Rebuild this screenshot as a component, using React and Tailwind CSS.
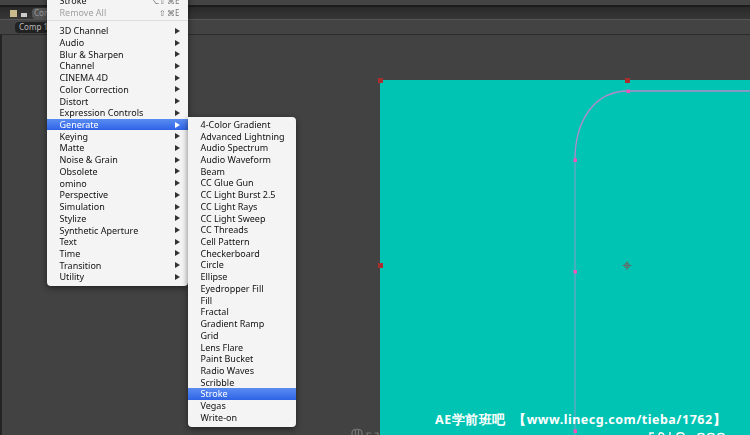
const effects = ["3D Channel","Audio","Blur & Sharpen","Channel","CINEMA 4D","Color Correction","Distort","Expression Controls","Generate","Keying","Matte","Noise & Grain","Obsolete","omino","Perspective","Simulation","Stylize","Synthetic Aperture","Text","Time","Transition","Utility"];
const generate = ["4-Color Gradient","Advanced Lightning","Audio Spectrum","Audio Waveform","Beam","CC Glue Gun","CC Light Burst 2.5","CC Light Rays","CC Light Sweep","CC Threads","Cell Pattern","Checkerboard","Circle","Ellipse","Eyedropper Fill","Fill","Fractal","Gradient Ramp","Grid","Lens Flare","Paint Bucket","Radio Waves","Scribble","Stroke","Vegas","Write-on"];

function Row({ label, active, arrow, right, muted }) {
  return (
    <div className={`flex h-[11.72px] items-center justify-between pl-[12.5px] pr-[8px] leading-none whitespace-nowrap ${active ? "bg-gradient-to-b from-[#5b8cf2] to-[#2f63e6] text-white" : muted ? "text-[#a0a0a0]" : "text-[#111]"}`}>
      <span>{label}</span>
      {arrow && <span className={`h-0 w-0 border-y-[3px] border-l-[5px] border-y-transparent ${active ? "border-l-white" : "border-l-[#333]"}`} />}
      {right && <span className="text-[8px] tracking-[0.5px] text-[#777]">{right}</span>}
    </div>
  );
}

function Handle({ className }) {
  return <div className={`absolute size-[5px] bg-[#a5302f] ${className}`} />;
}

export default function App() {
  return (
    <div className="relative h-[435px] w-[750px] overflow-hidden bg-[#424242] font-['DejaVu_Sans',sans-serif]">
      <div className="h-[7px] border-b-[2px] border-[#1c1c1c] bg-[#444]" />
      <div className="flex h-[13px] items-center gap-[3px] border-b border-[#555] bg-gradient-to-b from-[#2a2a2a] to-[#363636] pl-[10px] text-[8px] text-[#999]">
        <div className="size-[7px] bg-[#c9b88c]" />
        <div className="flex size-[7px] items-end justify-center"><div className="h-[4px] w-[6px] bg-[#ccc]" /></div>
        <div className="ml-[2px] flex h-[11px] w-[30px] items-center rounded-sm bg-[#555] pl-[2px]">Comp</div>
      </div>
      <div className="flex h-[15px] items-center border-b border-[#2c2c2c] bg-[#434343] pl-[15px] text-[8px] text-[#bbb]">
        <div className="flex h-[11px] w-[33px] items-center overflow-hidden whitespace-nowrap rounded-sm bg-[#222] pl-[4px]">Comp 1</div>
      </div>
      <div className="flex h-[400px]">
        <div className="w-[2px] bg-[#242424]" />
        <div className="flex-1 pl-[378px] pt-[45px]">
          <div className="h-[355px] bg-[#00c4b3]" />
        </div>
      </div>

      <svg className="absolute left-0 top-0" width="750" height="435" viewBox="0 0 750 435" fill="none">
        <path d="M575 160C575 120 595 91 628 91H750" stroke="#b38bc6" strokeWidth="1.3" />
        <path d="M575 160V435" stroke="#6aa8c4" strokeWidth="1.3" />
        <g fill="#ee55bb">
          <rect x="626.5" y="89.5" width="3.5" height="3.5" />
          <rect x="573.5" y="158.5" width="3.5" height="3.5" />
          <rect x="573.5" y="270" width="3.5" height="3.5" />
          <rect x="573.5" y="429.5" width="3.5" height="3.5" />
        </g>
        <g stroke="#5f6f6c" strokeWidth="1.1">
          <circle cx="627" cy="265.5" r="2.2" />
          <path d="M627 261V270M622.5 265.5H631.5" />
        </g>
        <g stroke="#777" strokeWidth="1.2">
          <path d="M352 435V433C352 428 362 428 362 433V435M355.5 430V435M358.5 430V435" />
          <path d="M367 435V433H371M375 433H378V435" />
        </g>
        <g stroke="#fff" strokeWidth="1.4">
          <path d="M650 435V433H654M659 435C659 432 663 432 664 435M670 435V432M677 435C677 432 684 432 684 435M698 435C698 433 704 433 704 435M708 435C708 433 714 433 714 435M718 435C718 433 724 433 724 435" />
        </g>
      </svg>

      <Handle className="left-[378px] top-[78px]" />
      <Handle className="left-[625px] top-[78px]" />
      <Handle className="left-[378px] top-[263px]" />

      <div className="absolute left-[435px] top-[411px] whitespace-nowrap font-['Noto_Sans_CJK_SC',sans-serif] text-[12.5px] font-bold leading-[18px] tracking-[0.5px] text-white">
        AE学前班吧&nbsp;&nbsp;【www.linecg.com/tieba/1762】
      </div>

      <div className="absolute left-[47px] top-[-5px] h-[291px] w-[141px] rounded-b-[4px] bg-[#f4f4f4] text-[9px] shadow-[0_2px_6px_rgba(0,0,0,0.5)] blur-[0.3px]">
        <Row label="Stroke" right="⌥⇧⌘E" />
        <Row label="Remove All" right="⇧⌘E" muted />
        <div className="mb-[2px] mt-[2px] h-px bg-[#dcdcdc]" />
        <div className="pt-[1.5px]">
          {effects.map((e) => <Row key={e} label={e} active={e === "Generate"} arrow />)}
        </div>
      </div>

      <div className="absolute left-[188px] top-[117px] w-[108px] rounded-[4px] rounded-tl-none bg-[#f4f4f4] pb-[3.5px] pt-[1.5px] text-[9px] shadow-[0_2px_6px_rgba(0,0,0,0.5)] blur-[0.3px]">
        {generate.map((g) => <Row key={g} label={g} active={g === "Stroke"} />)}
      </div>
    </div>
  );
}
